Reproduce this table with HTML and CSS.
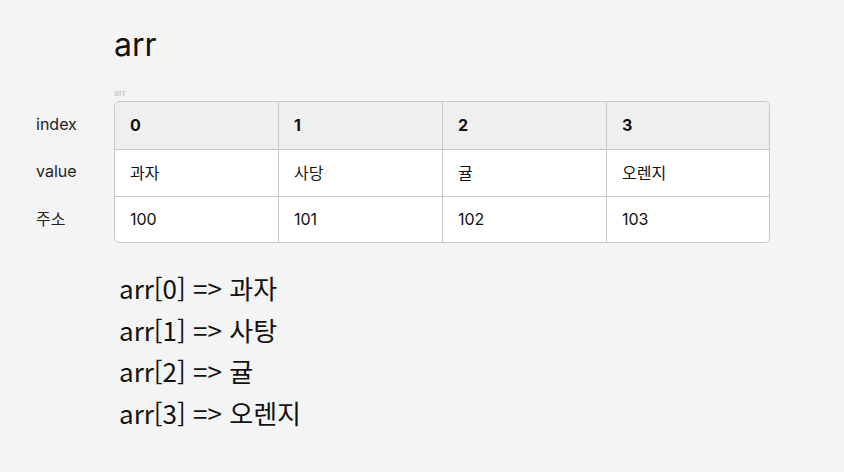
FILE: index.html
```html
<!DOCTYPE html>
<html lang="ko">
<head>
<meta charset="utf-8">
<link rel="stylesheet" href="styles.css">
</head>
<body>
<div class="page">
  <h1 class="title">arr</h1>
  <div class="caption">arr</div>
  <div class="grid">
    <div class="labels">
      <div class="label">index</div>
      <div class="label">value</div>
      <div class="label">주소</div>
    </div>
    <div class="table">
      <div class="row head">
        <div class="cell">0</div><div class="cell">1</div><div class="cell">2</div><div class="cell">3</div>
      </div>
      <div class="row">
        <div class="cell">과자</div><div class="cell">사당</div><div class="cell">귤</div><div class="cell">오렌지</div>
      </div>
      <div class="row last">
        <div class="cell">100</div><div class="cell">101</div><div class="cell">102</div><div class="cell">103</div>
      </div>
    </div>
  </div>
  <div class="list">
    <div class="line">arr[0] =&gt; 과자</div>
    <div class="line">arr[1] =&gt; 사탕</div>
    <div class="line">arr[2] =&gt; 귤</div>
    <div class="line">arr[3] =&gt; 오렌지</div>
  </div>
</div>
</body>
</html>
```

FILE: styles.css
```css
html, body {
  margin: 0;
  padding: 0;
  background: #f4f4f4;
}
body {
  font-family: Inter, "Noto Sans CJK KR", sans-serif;
  color: #111;
  width: 844px;
  height: 472px;
  overflow: hidden;
}
.page {
  padding: 22px 0 0 36px;
}
.title {
  margin: 0 0 0 78px;
  font-size: 32px;
  font-weight: 400;
  line-height: 46px;
  color: #111;
}
.caption {
  margin: 19px 0 0 78px;
  font-size: 9px;
  line-height: 11px;
  color: #bdbdbd;
}
.grid {
  display: flex;
  margin-top: 3px;
}
.labels {
  width: 78px;
  display: flex;
  flex-direction: column;
}
.label {
  box-sizing: border-box;
  font-size: 16px;
  color: #222;
  display: flex;
  align-items: center;
  height: 47px;
  padding-bottom: 2px;
}
.table {
  box-sizing: border-box;
  width: 656px;
  border: 1px solid #c8c8c8;
  border-radius: 5px;
  overflow: hidden;
  background: #fff;
}
.row {
  display: grid;
  grid-template-columns: 164px 164px 164px 1fr;
  height: 46px;
  border-bottom: 1px solid #c8c8c8;
}
.row.last {
  border-bottom: none;
  height: 45px;
}
.row.head {
  background: #efefef;
  font-weight: 700;
  height: 47px;
}
.cell {
  display: flex;
  align-items: center;
  padding: 0 0 2px 15px;
  font-size: 16px;
  border-right: 1px solid #c8c8c8;
}
.cell:last-child {
  border-right: none;
}
.list {
  margin: 24px 0 0 83px;
  font-family: "Noto Sans CJK KR", sans-serif;
  font-size: 26px;
  line-height: 41.5px;
  color: #111;
}
```
